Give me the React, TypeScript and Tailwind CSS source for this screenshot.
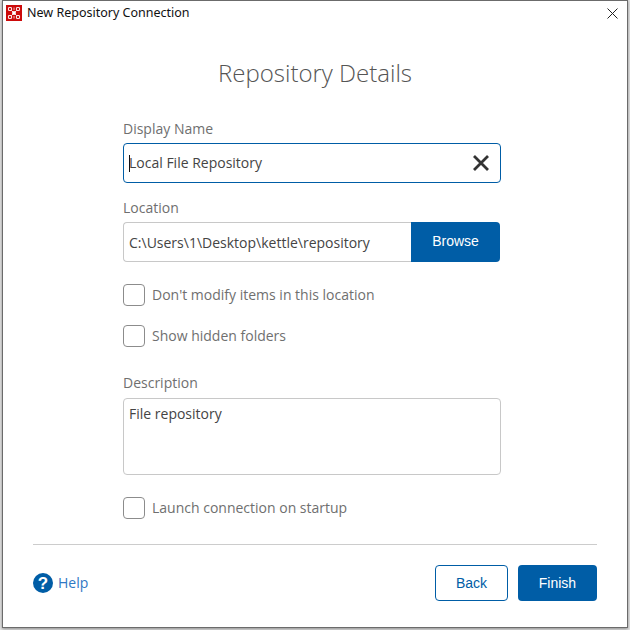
const sans = "font-['Open_Sans',sans-serif]";
const arial = "font-['Liberation_Sans',Arial,sans-serif]";

// ─── Small bits ─────────────────────────────────────────────────────────────
const AppLogo = () => (
    <svg width="16" height="16" viewBox="0 0 16 16" className="shrink-0">
        <rect width="16" height="16" fill="#cc0a0a" />
        <path d="M5 5 L11 11 M11 5 L5 11 M8 2.5 L8 5 M8 11 L8 13.5" stroke="#f3b5b5" strokeWidth="1" fill="none" />
        <g fill="none" stroke="#fbe4e4" strokeWidth="1.1">
            <rect x="2.5" y="2.5" width="3" height="3" rx="0.8" />
            <rect x="10.5" y="2.5" width="3" height="3" rx="0.8" />
            <rect x="2.5" y="10.5" width="3" height="3" rx="0.8" />
            <rect x="10.5" y="10.5" width="3" height="3" rx="0.8" />
        </g>
        <rect x="6.2" y="6.2" width="3.6" height="3.6" fill="#ffffff" />
    </svg>
);

const CheckRow = ({ label, className }: { label: string; className?: string }) => (
    <label className={`flex items-center gap-[7px] h-[22px] ${className ?? ""}`}>
        <span className="w-[22px] h-[22px] rounded-[4px] border border-[#8c8c8c] bg-white shrink-0" />
        <span className={`${sans} pb-[2px] text-[14px] text-[#6f6f6f]`}>{label}</span>
    </label>
);

const FieldLabel = ({ children, className }: { children: string; className?: string }) => (
    <div className={`${sans} text-[14px] leading-[20px] text-[#6f6f6f] ${className ?? ""}`}>{children}</div>
);

export default function App() {
    return (
        <div className="w-[630px] h-[630px] bg-[#e4e4e4] pl-[2px] pr-[2px] pb-[2px] overflow-hidden">
            <div className="w-[626px] h-[628px] bg-white border border-[#6b6b6b] flex flex-col shadow-[0_1px_3px_rgba(0,0,0,0.4)]">
                {/* Title bar */}
                <div className="h-[24px] flex items-center pl-[3px] pr-[9px] shrink-0">
                    <AppLogo />
                    <span className="font-['Noto_Sans',sans-serif] ml-[5px] text-[12.5px] text-[#111111]">New Repository Connection</span>
                    <svg width="11" height="11" viewBox="0 0 11 11" className="ml-auto">
                        <path d="M0.5 0.5 L10.5 10.5 M10.5 0.5 L0.5 10.5" stroke="#222222" strokeWidth="1" />
                    </svg>
                </div>

                <h1 className={`${sans} font-light text-center text-[24px] leading-[32px] text-[#555555] mt-[32px]`}>
                    Repository Details
                </h1>

                {/* Form */}
                <div className="w-[378px] ml-[120px] mt-[30px] flex flex-col">
                    <FieldLabel>Display Name</FieldLabel>
                    <div className="mt-[4px] h-[40px] rounded-[4px] border border-[#005da6] flex items-center pl-[5px] pr-[9px]">
                        <span className="w-px h-[17px] bg-[#111111] -mr-px" />
                        <span className={`${sans} pb-[2px] text-[14px] text-[#444444]`}>Local File Repository</span>
                        <svg width="20" height="20" viewBox="0 0 20 20" className="ml-auto">
                            <path d="M3 3 L17 17 M17 3 L3 17" stroke="#333333" strokeWidth="2.8" />
                        </svg>
                    </div>

                    <FieldLabel className="mt-[15px]">Location</FieldLabel>
                    <div className="mt-[4px] h-[40px] flex w-[377px]">
                        <div className={`${sans} flex-1 rounded-l-[4px] border border-r-0 border-[#c8c8c8] flex items-center pl-[5px] text-[14px] text-[#444444]`}>
                            {"C:\\Users\\1\\Desktop\\kettle\\repository"}
                        </div>
                        <button className={`${arial} w-[89px] pb-[2px] rounded-r-[4px] bg-[#005da6] text-white text-[14px]`}>Browse</button>
                    </div>

                    <CheckRow label="Don't modify items in this location" className="mt-[22px]" />
                    <CheckRow label="Show hidden folders" className="mt-[19px]" />

                    <FieldLabel className="mt-[26px]">Description</FieldLabel>
                    <div className={`${sans} mt-[5px] h-[77px] rounded-[4px] border border-[#c8c8c8] pl-[5px] pt-[4px] text-[14px] text-[#444444]`}>
                        File repository
                    </div>

                    <CheckRow label="Launch connection on startup" className="mt-[22px]" />
                </div>

                {/* Footer */}
                <div className="mx-[30px] mt-[25px] border-t border-[#cccccc] pt-[20px] flex items-center">
                    <svg width="20" height="20" viewBox="0 0 20 20">
                        <circle cx="10" cy="10" r="10" fill="#005da6" />
                        <text x="10" y="16" textAnchor="middle" fontSize="17" fontWeight="700" fill="#ffffff" fontFamily="Liberation Sans, Arial, sans-serif">?</text>
                    </svg>
                    <span className={`${sans} ml-[5px] -mt-[1px] text-[14px] text-[#2f78c4]`}>Help</span>
                    <button className={`${arial} ml-auto w-[73px] h-[36px] rounded-[4px] border border-[#005da6] text-[14px] text-[#005da6] bg-white`}>Back</button>
                    <button className={`${arial} ml-[10px] w-[79px] h-[36px] rounded-[4px] bg-[#005da6] text-[14px] text-white`}>Finish</button>
                </div>
            </div>
        </div>
    );
}
